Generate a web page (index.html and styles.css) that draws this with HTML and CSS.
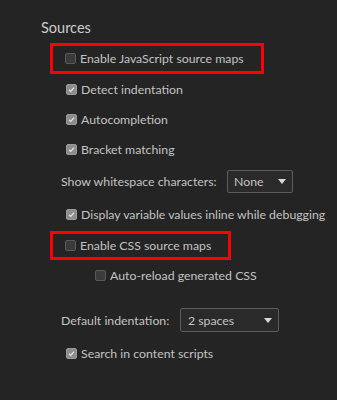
FILE: index.html
```html
<!DOCTYPE html>
<html lang="en">
<head>
    <meta charset="UTF-8">
    <title>Settings - Sources</title>
    <link rel="stylesheet" href="styles.css">
</head>
<body>

    <div class="settings-section">
        <h2>Sources</h2>

        <div class="row highlight first">
            <span class="cb"></span>
            <span class="label">Enable JavaScript source maps</span>
        </div>
        <div class="row">
            <span class="cb checked"><svg viewBox="0 0 11 11"><path d="M2.5 5.8 L4.6 7.8 L8.6 3.2" /></svg></span>
            <span class="label">Detect indentation</span>
        </div>
        <div class="row">
            <span class="cb checked"><svg viewBox="0 0 11 11"><path d="M2.5 5.8 L4.6 7.8 L8.6 3.2" /></svg></span>
            <span class="label">Autocompletion</span>
        </div>
        <div class="row">
            <span class="cb checked"><svg viewBox="0 0 11 11"><path d="M2.5 5.8 L4.6 7.8 L8.6 3.2" /></svg></span>
            <span class="label">Bracket matching</span>
        </div>

        <div class="row select-row whitespace">
            <span class="label field-label ws-label">Show whitespace characters:</span>
            <div class="select select-none">
                <span>None</span>
                <span class="arrow"></span>
            </div>
        </div>

        <div class="row">
            <span class="cb checked"><svg viewBox="0 0 11 11"><path d="M2.5 5.8 L4.6 7.8 L8.6 3.2" /></svg></span>
            <span class="label">Display variable values inline while debugging</span>
        </div>
        <div class="row highlight second">
            <span class="cb"></span>
            <span class="label">Enable CSS source maps</span>
        </div>
        <div class="row nested">
            <span class="cb"></span>
            <span class="label">Auto-reload generated CSS</span>
        </div>

        <div class="row select-row indentation">
            <span class="label field-label indent-label">Default indentation:</span>
            <div class="select select-indent">
                <span>2 spaces</span>
                <span class="arrow"></span>
            </div>
        </div>

        <div class="row last">
            <span class="cb checked"><svg viewBox="0 0 11 11"><path d="M2.5 5.8 L4.6 7.8 L8.6 3.2" /></svg></span>
            <span class="label">Search in content scripts</span>
        </div>
    </div>

</body>
</html>
```

FILE: styles.css
```css
body {
    margin: 0;
    background-color: #242424;
    color: #c3c3c3;
    font-family: Lato, "Open Sans", sans-serif;
    font-size: 12.3px;
    height: 400px;
    overflow: hidden;
}

.settings-section {
    padding: 18px 0 0 41px;
}

h2 {
    margin: 0;
    font-size: 14.5px;
    font-weight: normal;
    line-height: 20px;
    color: #cccccc;
}

.row {
    display: flex;
    align-items: center;
    height: 30px;
    padding-left: 25px;
    box-sizing: border-box;
    white-space: nowrap;
}

.label {
    line-height: 16px;
    padding-top: 1px;
}

.cb {
    width: 11px;
    height: 11px;
    margin-right: 4px;
    flex-shrink: 0;
    box-sizing: border-box;
    border: 1px solid #5a5a5a;
    border-radius: 2px;
    background-color: #3b3b3b;
    display: flex;
}

.cb.checked {
    background-color: #8c8c8c;
    border-color: #9a9a9a;
}

.cb svg {
    width: 9px;
    height: 9px;
}

.cb svg path {
    fill: none;
    stroke: #e6e6e6;
    stroke-width: 1.6;
}

.highlight {
    border: 3px solid #ff0000;
    margin-left: 9px;
    padding-left: 12px;
}

.highlight.first {
    margin-top: 5px;
    width: 214px;
    height: 31px;
}

.highlight.second {
    margin-top: 2px;
    width: 181px;
    height: 29px;
}

.nested {
    padding-left: 54px;
}

.select-row {
    padding-left: 20px;
}

.whitespace {
    height: 35px;
}

.indentation {
    margin-top: 15px;
}

.last {
    margin-top: 3px;
}

.ws-label {
    width: 166px;
}

.indent-label {
    width: 119px;
}

.select {
    display: flex;
    align-items: center;
    justify-content: space-between;
    box-sizing: border-box;
    border: 1px solid #5c5c5c;
    border-radius: 2px;
    background-color: #2a2a2a;
    color: #c3c3c3;
}

.select-none {
    width: 66px;
    height: 23px;
    padding: 0 6px;
}

.select-indent {
    width: 99px;
    height: 24px;
    padding: 0 6px 0 7px;
}

.arrow {
    width: 0;
    height: 0;
    border-left: 4px solid transparent;
    border-right: 4px solid transparent;
    border-top: 5px solid #d8d8d8;
}
```
